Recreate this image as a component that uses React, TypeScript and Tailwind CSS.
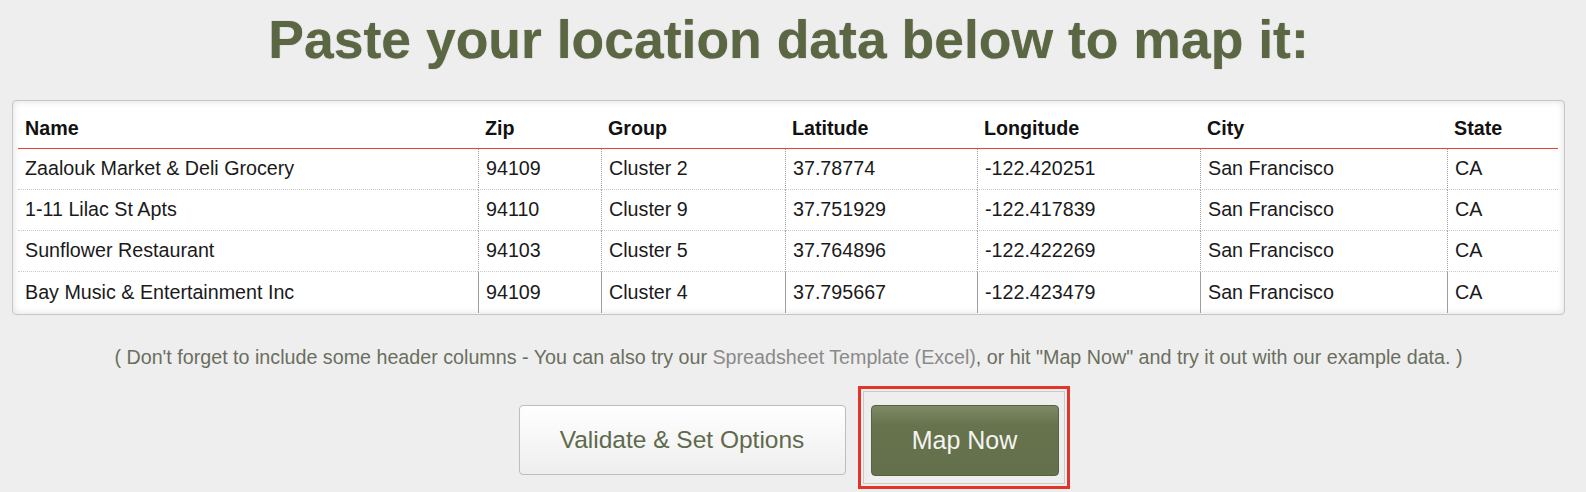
import React from "react";

const cols = ["Name", "Zip", "Group", "Latitude", "Longitude", "City", "State"];

const rows = [
  ["Zaalouk Market & Deli Grocery", "94109", "Cluster 2", "37.78774", "-122.420251", "San Francisco", "CA"],
  ["1-11 Lilac St Apts", "94110", "Cluster 9", "37.751929", "-122.417839", "San Francisco", "CA"],
  ["Sunflower Restaurant", "94103", "Cluster 5", "37.764896", "-122.422269", "San Francisco", "CA"],
  ["Bay Music & Entertainment Inc", "94109", "Cluster 4", "37.795667", "-122.423479", "San Francisco", "CA"],
];

export default function App() {
  return (
    <div className="w-[1586px] h-[492px] overflow-hidden bg-[#eeeeee] font-['Liberation_Sans',Arial,sans-serif]">
      <div className="ml-[12px] w-[1553px] flex flex-col items-center">
        <h1 className="mt-[10px] h-[60px] leading-[60px] text-[53.5px] font-bold text-[#5b6742] text-center [text-shadow:0_0_1px_#8a8a8a]">
          Paste your location data below to map it:
        </h1>

        {/* data grid */}
        <div className="mt-[30px] w-full h-[215px] rounded-[4px] border border-[#c6c6c6] bg-white pt-[11px] pl-[5px] pr-[6px] pb-[1px] shadow-[inset_0_0_7px_rgba(0,0,0,0.14)]">
          <div className="grid grid-cols-[460px_123px_184px_192px_223px_247px_111px] w-[1540px] text-[19.7px] text-[#1a1a1a]">
            {cols.map((c) => (
              <div
                key={c}
                className="h-[37px] px-[7px] flex items-center pb-[3px] font-bold text-[#111] border-b border-[#e5432c]"
              >
                {c}
              </div>
            ))}
            {rows.map((r, i) =>
              r.map((v, j) => (
                <div
                  key={i + "-" + j}
                  className={`h-[41px] px-[7px] flex items-center ${j > 0 ? "border-l border-[#9e9e9e]" : ""} ${
                    i < rows.length - 1 ? "border-b border-dotted border-b-[#c8c8c8]" : ""
                  }`}
                >
                  {v}
                </div>
              ))
            )}
          </div>
        </div>

        <p className="mt-[30px] h-[24px] leading-[24px] text-[19.7px] text-[#6a6e5e] text-center whitespace-nowrap">
          ( Don't forget to include some header columns - You can also try our{" "}
          <span className="text-[#8a8a8a]">Spreadsheet Template (Excel)</span>, or hit "Map Now" and try it out with
          our example data. )
        </p>

        <div className="mt-[36px] flex items-start gap-[25px]">
          <button className="w-[327px] h-[70px] rounded-[4px] border border-[#bdbdbd] bg-gradient-to-b from-white to-[#eeeeee] text-[24.5px] text-[#5f6a4c]">
            Validate &amp; Set Options
          </button>
          <div className="relative">
            <button className="w-[188px] h-[71px] rounded-[4px] border border-[#56613f] bg-[linear-gradient(#7f8968,#66734d_28%,#63704b)] text-[25px] text-[#f4f4f0]">
              Map Now
            </button>
            <div className="absolute -left-[13px] -top-[19px] -right-[11px] -bottom-[13px] border-[3px] border-[#e3342a] shadow-[inset_0_0_0_2px_#eeeeee,inset_0_0_0_3px_#c9c9c9] pointer-events-none" />
          </div>
        </div>
      </div>
    </div>
  );
}
